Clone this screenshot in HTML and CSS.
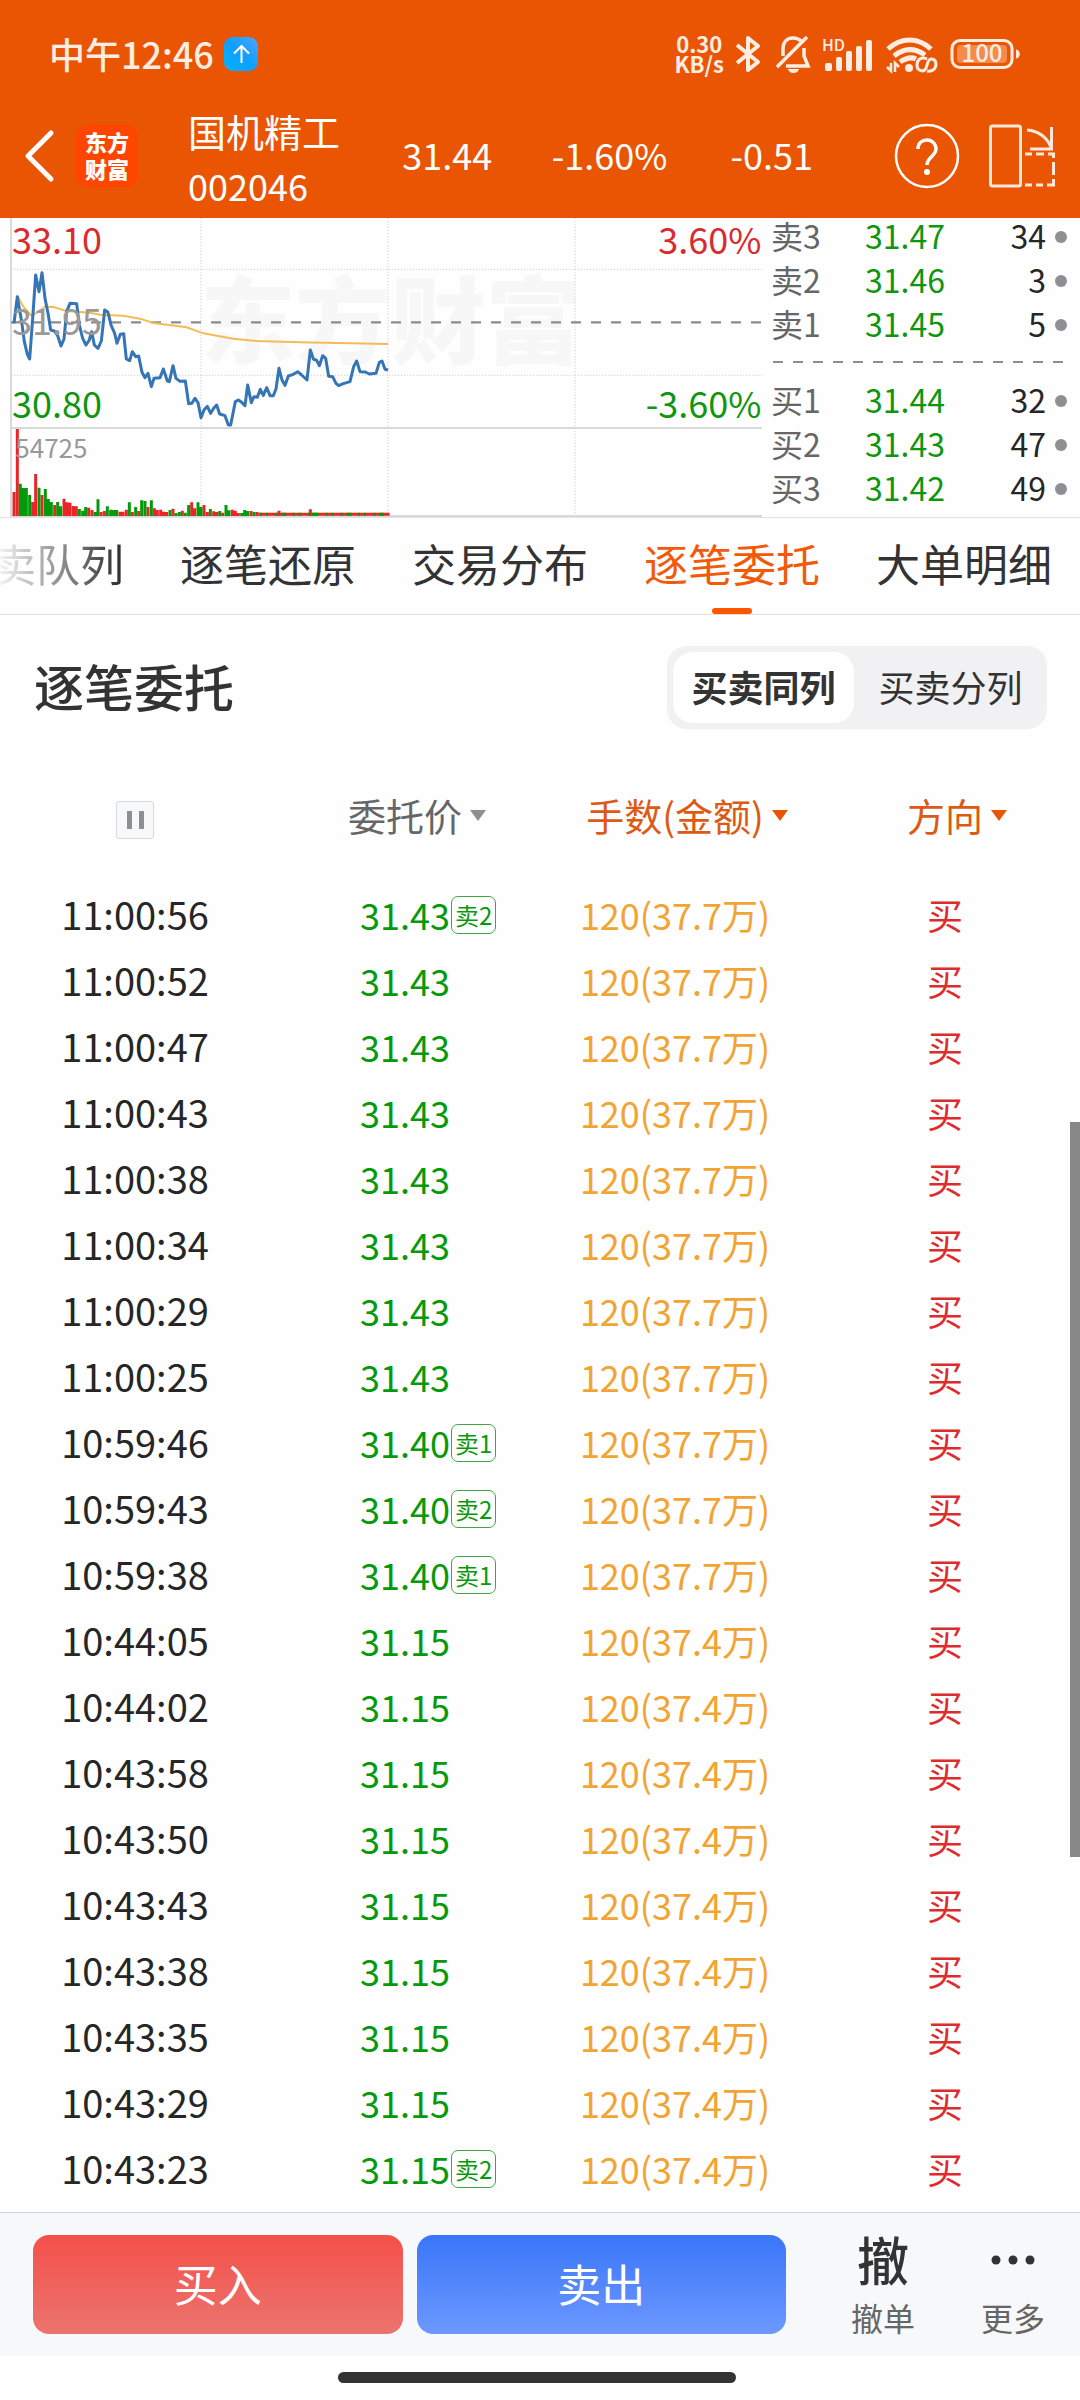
FILE: index.html
```html
<!DOCTYPE html>
<html lang="zh-CN">
<head>
<meta charset="utf-8">
<meta name="viewport" content="width=device-width, initial-scale=1">
<title>国机精工 002046</title>
<link rel="stylesheet" href="styles.css">
</head>
<body>
<header class="top">
  <div class="status">
    <span class="status-time">中午12:46</span>
    <svg class="status-app" width="34" height="34" viewBox="0 0 34 34" aria-hidden="true">
      <defs><linearGradient id="app" x1="0" y1="1" x2="1" y2="0"><stop offset="0" stop-color="#00b4ff"/><stop offset=".5" stop-color="#0f9fff"/><stop offset="1" stop-color="#4fa4ff"/></linearGradient></defs>
      <rect width="34" height="34" rx="9" fill="url(#app)"/>
      <path d="M17.500 26V9M10 16.500L17.500 9L25 16.500" fill="none" stroke="#fff" stroke-width="2"/>
    </svg>
    <div class="status-icons">
      <span class="net-speed"><span>0.30</span><span>KB/s</span></span>
      <svg width="28" height="40" viewBox="0 0 28 40" fill="none" stroke="#ffede2" stroke-width="4" stroke-linejoin="round" aria-hidden="true">
        <path d="M1 11L22 28L12 36V4L22 12L1 29"/>
      </svg>
      <svg width="34" height="40" viewBox="0 0 34 40" fill="none" stroke="#ffede2" stroke-width="3.500" aria-hidden="true">
        <path d="M7 22V15C7 8 11 4 17 4C20 4 23 5 25 7"/><path d="M28 14V22L32 32H10"/><path d="M1 33L31 3"/>
        <path d="M12 35H23C22 38 20 39 17.500 39C15 39 13 38 12 35Z" fill="#ffede2" stroke="none"/>
      </svg>
      <svg width="52" height="40" viewBox="0 0 52 40" aria-hidden="true">
        <g fill="#ffede2"><rect x="3" y="29" width="7" height="8" rx="2"/><rect x="14" y="23" width="6" height="14" rx="2"/><rect x="24" y="17" width="6" height="20" rx="2"/><rect x="34" y="12" width="6" height="25" rx="2"/><rect x="44" y="6" width="6" height="31" rx="2"/></g>
        <text class="hd" x="0" y="17">HD</text>
      </svg>
      <svg width="52" height="40" viewBox="0 0 52 40" fill="none" stroke="#ffede2" aria-hidden="true">
        <path d="M2 15C15 3 32 3 45 15" stroke-width="5"/><path d="M8 22C18 14 29 14 39 21" stroke-width="5"/><path d="M14 28C20 24 26 23 30 25" stroke-width="5"/>
        <circle cx="23" cy="34" r="4" fill="#ffede2" stroke="none"/>
        <path d="M5 29V37L1 33M9 38V29L13 33" stroke-width="2.500"/>
        <path d="M41 25C35 22 31 26 31 31C31 37 38 39 40 34L42 28C44 23 50 25 50 30C50 35 46 38 41 37" stroke-width="3"/>
      </svg>
      <svg width="70" height="40" viewBox="0 0 70 40" aria-hidden="true">
        <rect x="2" y="6.500" width="60" height="27" rx="8" fill="none" stroke="#ffede2" stroke-width="3"/>
        <rect x="7" y="11" width="50" height="18" rx="4" fill="#f48a4c"/>
        <path d="M66 15.500C71 16 71 24 66 24.500Z" fill="#ffede2"/>
        <text class="battery-level" x="32" y="28" text-anchor="middle">100</text>
      </svg>
    </div>
  </div>
  <div class="nav">
    <button class="icon-btn back" type="button" aria-label="返回">
      <svg width="32" height="54" viewBox="0 0 32 54" fill="none" stroke="#fff" stroke-width="5" stroke-linecap="round" stroke-linejoin="round"><path d="M27 4L4 27L27 50"/></svg>
    </button>
    <span class="brand"><span>东方</span><span>财富</span></span>
    <h1 class="stock"><span>国机精工</span><span class="code">002046</span></h1>
    <div class="quote"><span>31.44</span><span>-1.60%</span><span>-0.51</span></div>
    <button class="icon-btn" type="button" aria-label="帮助">
      <svg width="66" height="66" viewBox="0 0 66 66" fill="none" stroke="#fff"><circle cx="33" cy="33" r="31" stroke-width="2.500"/><path d="M24 26C24 20 28 17 33 17C38 17 42 21 42 26C42 33 33 34 33 42" stroke-width="3.500"/><circle cx="33" cy="49" r="3" fill="#fff" stroke="none"/></svg>
    </button>
    <button class="icon-btn rotate" type="button" aria-label="横屏">
      <svg width="66" height="64" viewBox="0 0 66 64" fill="none" stroke="#ffe9dc" stroke-width="3"><rect x="1.500" y="2" width="30" height="60" rx="2"/><path d="M38 6C50 7 58 14 62 23M62.500 3V25H41"/><path d="M36 30H43M47 30H55M59 30H64.500V34M64.500 38V51M64.500 55V61H58M54 61H47M43 61H36"/></svg>
    </button>
  </div>
</header>

<section class="market">
  <svg class="chart" viewBox="0 9 2286 897" role="img" aria-label="分时走势">
    <text class="watermark" x="600" y="427">东方财富</text>
    <g class="grid-dots"><path d="M33 163H2286M33 481H2286M603 9V900M1164 9V900M1725 9V900"/></g>
    <path class="frame" d="M33 9V906M33 639H2286M33 903H2286"/>
    <path d="M33 322H2286" stroke="#8c8c8c" stroke-width="7" stroke-dasharray="30 30"/>
    <path d="M52 242L70 275L95 303L115 290L135 275L160 276L200 288L270 293L300 299L370 302L420 311L460 324L560 337L610 355L700 371L770 378L900 382L1164 387" fill="none" stroke="#f2bd55" stroke-width="6"/>
    <path d="M42 325L52 245L65 320L73 380L82 418L89 432L98 310L107 180L117 230L126 173L135 250L145 300L152 345L163 348L173 362L183 393L192 372L200 290L210 265L230 266L238 330L248 370L258 390L268 375L275 350L283 390L294 400L304 378L314 285L324 292L333 330L344 355L351 385L361 358L371 356L379 432L389 437L397 410L407 425L416 423L426 472L435 488L444 475L454 515L462 490L480 488L490 462L502 498L508 500L519 452L528 490L540 499L556 498L566 566L575 565L585 550L594 563L603 608L612 585L622 574L632 595L641 580L650 570L659 597L675 602L685 630L692 630L697 605L706 560L715 555L725 562L735 572L743 510L754 563L762 545L772 547L781 523L790 541L800 518L810 542L820 542L828 522L837 460L846 495L855 511L865 483L880 478L893 470L905 480L921 495L931 405L940 432L950 436L958 452L968 422L977 430L986 484L998 485L1008 505L1016 512L1030 506L1050 500L1061 455L1070 438L1080 470L1096 471L1108 477L1128 475L1138 442L1146 438L1155 463L1164 465" fill="none" stroke="#3574b5" stroke-width="9" stroke-linejoin="round"/>
    <g fill="none" stroke-width="9">
      <path stroke="#e8262a" d="M42 903V831M52 903V642M98 903V861M107 903V777M126 903V840M164 903V870M192 903V851M201 903V862M210 903V863M220 903V873M229 903V874M266 903V878M276 903V885M303 903V891M313 903V888M360 903V890M369 903V890M379 903V884M397 903V891M416 903V888M444 903V876M463 903V880M472 903V885M482 903V884M491 903V890M500 903V891M519 903V881M547 903V887M575 903V862M584 903V880M612 903V870M622 903V891M641 903V889M650 903V891M668 903V893M697 903V884M706 903V887M715 903V894M753 903V888M771 903V891M837 903V887M931 903V883M776 898H1169"/>
      <path stroke="#069a0b" d="M61 903V806M70 903V819M79 903V819M89 903V840M117 903V818M136 903V822M145 903V852M154 903V861M173 903V861M182 903V874M238 903V882M248 903V887M257 903V876M285 903V891M294 903V853M322 903V874M332 903V884M341 903V885M350 903V885M388 903V862M407 903V876M425 903V856M435 903V858M454 903V856M510 903V885M528 903V894M538 903V891M556 903V893M566 903V870M594 903V862M603 903V876M631 903V882M659 903V888M678 903V870M687 903V886M725 903V894M734 903V885M743 903V888M762 903V891M940 903V893"/>
      <path stroke="#069a0b" stroke-dasharray="6 12 6 22 6 12 14 20" d="M780 898H1160"/>
    </g>
    <g class="chart-label">
      <text class="up" x="36" y="117">33.10</text><text class="flat" x="36" y="361">31.95</text><text class="down" x="36" y="608">30.80</text>
      <text class="up" x="2284" y="117" text-anchor="end">3.60%</text><text class="down" x="2284" y="608" text-anchor="end">-3.60%</text>
      <text class="volume" x="46" y="728">54725</text>
    </g>
  </svg>
  <div class="book">
    <table>
      <tr><th scope="row">卖3</th><td>31.47</td><td class="lots">34</td></tr>
      <tr><th scope="row">卖2</th><td>31.46</td><td class="lots">3</td></tr>
      <tr><th scope="row">卖1</th><td>31.45</td><td class="lots">5</td></tr>
    </table>
    <hr class="spread">
    <table>
      <tr><th scope="row">买1</th><td>31.44</td><td class="lots">32</td></tr>
      <tr><th scope="row">买2</th><td>31.43</td><td class="lots">47</td></tr>
      <tr><th scope="row">买3</th><td>31.42</td><td class="lots">49</td></tr>
    </table>
  </div>
</section>

<nav class="tabs">
  <button type="button" class="tab faded">卖队列</button>
  <button type="button" class="tab">逐笔还原</button>
  <button type="button" class="tab">交易分布</button>
  <button type="button" class="tab active" aria-current="page">逐笔委托</button>
  <button type="button" class="tab">大单明细</button>
</nav>

<main class="panel">
  <div class="panel-head">
    <h2>逐笔委托</h2>
    <div class="segment">
      <button type="button" class="on" aria-pressed="true">买卖同列</button>
      <button type="button" aria-pressed="false">买卖分列</button>
    </div>
  </div>
  <table class="orders">
    <thead>
      <tr>
        <th><button type="button" class="pause" aria-label="暂停"><i></i><i></i></button></th>
        <th><button type="button" class="sort">委托价</button></th>
        <th><button type="button" class="sort hot">手数(金额)</button></th>
        <th><button type="button" class="sort hot">方向</button></th>
      </tr>
    </thead>
    <tbody>
      <tr><td>11:00:56</td><td><span class="price">31.43<span class="badge">卖2</span></span></td><td>120(37.7万)</td><td>买</td></tr>
      <tr><td>11:00:52</td><td>31.43</td><td>120(37.7万)</td><td>买</td></tr>
      <tr><td>11:00:47</td><td>31.43</td><td>120(37.7万)</td><td>买</td></tr>
      <tr><td>11:00:43</td><td>31.43</td><td>120(37.7万)</td><td>买</td></tr>
      <tr><td>11:00:38</td><td>31.43</td><td>120(37.7万)</td><td>买</td></tr>
      <tr><td>11:00:34</td><td>31.43</td><td>120(37.7万)</td><td>买</td></tr>
      <tr><td>11:00:29</td><td>31.43</td><td>120(37.7万)</td><td>买</td></tr>
      <tr><td>11:00:25</td><td>31.43</td><td>120(37.7万)</td><td>买</td></tr>
      <tr><td>10:59:46</td><td><span class="price">31.40<span class="badge">卖1</span></span></td><td>120(37.7万)</td><td>买</td></tr>
      <tr><td>10:59:43</td><td><span class="price">31.40<span class="badge">卖2</span></span></td><td>120(37.7万)</td><td>买</td></tr>
      <tr><td>10:59:38</td><td><span class="price">31.40<span class="badge">卖1</span></span></td><td>120(37.7万)</td><td>买</td></tr>
      <tr><td>10:44:05</td><td>31.15</td><td>120(37.4万)</td><td>买</td></tr>
      <tr><td>10:44:02</td><td>31.15</td><td>120(37.4万)</td><td>买</td></tr>
      <tr><td>10:43:58</td><td>31.15</td><td>120(37.4万)</td><td>买</td></tr>
      <tr><td>10:43:50</td><td>31.15</td><td>120(37.4万)</td><td>买</td></tr>
      <tr><td>10:43:43</td><td>31.15</td><td>120(37.4万)</td><td>买</td></tr>
      <tr><td>10:43:38</td><td>31.15</td><td>120(37.4万)</td><td>买</td></tr>
      <tr><td>10:43:35</td><td>31.15</td><td>120(37.4万)</td><td>买</td></tr>
      <tr><td>10:43:29</td><td>31.15</td><td>120(37.4万)</td><td>买</td></tr>
      <tr><td>10:43:23</td><td><span class="price">31.15<span class="badge">卖2</span></span></td><td>120(37.4万)</td><td>买</td></tr>
    </tbody>
  </table>
  <div class="scroll-thumb"></div>
</main>

<footer class="actions">
  <button type="button" class="trade buy">买入</button>
  <button type="button" class="trade sell">卖出</button>
  <div class="extra">
    <button type="button" class="action"><span class="glyph">撤</span><span>撤单</span></button>
    <button type="button" class="action"><span class="glyph dots"><svg width="44" height="10" viewBox="0 0 44 10" fill="#333"><circle cx="5" cy="5" r="4.500"/><circle cx="22" cy="5" r="4.500"/><circle cx="39" cy="5" r="4.500"/></svg></span><span>更多</span></button>
  </div>
</footer>
<div class="home"><span></span></div>
</body>
</html>
```

FILE: styles.css
```css
* { box-sizing: border-box; }

body {
  margin: 0;
  min-height: 100vh;
  display: flex;
  flex-direction: column;
  background: #fefefe;
  color: #262626;
  font-family: "Noto Sans CJK SC", sans-serif;
  font-size: 36px;
  overflow-x: hidden;
}

button {
  margin: 0;
  padding: 0;
  border: 0;
  background: none;
  color: inherit;
  font: inherit;
  cursor: pointer;
}

svg { display: block; flex: none; overflow: visible; }
table { border-collapse: collapse; width: 100%; }
th, td { padding: 0; font-weight: 400; }

/* status bar and stock header */
.top { background: #ea5504; color: #fff; padding-bottom: 4px; }

.status {
  display: flex;
  align-items: center;
  height: 98px;
  padding: 10px 60px 0 49px;
  color: #ffede2;
}
.status-time { padding-bottom: 3px; font-weight: 500; line-height: 44px; }
.status-app { margin-left: 10px; }
.status-icons { display: flex; align-items: center; gap: 12px; margin-left: auto; }
.net-speed { display: flex; flex-direction: column; padding-bottom: 2px; font-size: 22px; font-weight: 700; line-height: 20px; text-align: center; }
.hd { font-size: 16px; font-weight: 500; fill: #ffede2; }
.battery-level { font-size: 24px; font-weight: 500; fill: #ffede2; }

.nav { display: flex; align-items: center; height: 116px; padding: 0 25px 0 24px; }
.icon-btn { flex: none; }
.back { width: 52px; }
.rotate { margin-left: 29px; }
.brand {
  display: flex;
  flex-direction: column;
  justify-content: center;
  width: 62px;
  height: 62px;
  padding-bottom: 2px;
  border-radius: 12px;
  background: #ff4500;
  font-size: 22px;
  font-weight: 900;
  line-height: 27px;
  text-align: center;
}
.stock {
  display: flex;
  flex-direction: column;
  margin: 0 0 0 50px;
  padding-top: 4px;
  font-size: 38px;
  font-weight: 400;
  line-height: 54px;
}
.code { font-size: 36px; }
.quote {
  flex: 1;
  display: grid;
  grid-template-columns: repeat(3, 1fr);
  margin: 0 41px 0 26px;
  padding-bottom: 4px;
  text-align: center;
}

/* intraday chart and order book */
.market {
  display: grid;
  grid-template-columns: 762fr 318fr;
  border-bottom: 1px solid #e2e2e2;
}
.chart { width: 100%; height: auto; }
.watermark { font-size: 286px; font-weight: 900; fill: #f7f7f7; }
.grid-dots { stroke: #dcdcdc; stroke-width: 4; stroke-dasharray: 4 5; }
.frame { fill: none; stroke: #d9d9d9; stroke-width: 6; }
.chart-label { font-size: 108px; }
.volume { font-size: 78px; fill: #999; }
.up { fill: #d92b2f; }
.down { fill: #0f960f; }
.flat { fill: #999; }

.book { padding: 0 13px 0 9px; font-size: 32px; line-height: 34px; }
.book table { table-layout: fixed; }
.book tr > * { padding-bottom: 10px; white-space: nowrap; }
.book th { width: 58px; color: #666; text-align: left; }
.book td { color: #0f960f; text-align: right; }
.book td:nth-child(2) { width: 116px; }
.book .lots { color: #262626; }
.lots::after {
  content: "";
  display: inline-block;
  width: 12px;
  height: 12px;
  margin-left: 9px;
  border-radius: 50%;
  background: #8e8e93;
  vertical-align: 6px;
}
.spread {
  height: 2px;
  margin: 11px -4px 19px 2px;
  border: 0;
  background: repeating-linear-gradient(90deg, #8c8c8c 0 10px, transparent 10px 20px);
}

/* section tabs */
.tabs {
  display: flex;
  justify-content: flex-end;
  gap: 56px;
  height: 97px;
  padding-right: 28px;
  border-bottom: 1px solid #e0e0e0;
  color: #333;
  font-size: 44px;
}
.tab { position: relative; flex: none; padding-bottom: 6px; white-space: nowrap; }
.faded {
  background: linear-gradient(90deg, #fff, #333 95%);
  background-clip: text;
  -webkit-background-clip: text;
  color: transparent;
}
.active { color: #f25a0a; }
.active::after {
  content: "";
  position: absolute;
  left: 50%;
  bottom: 0;
  width: 40px;
  height: 6px;
  margin-left: -20px;
  border-radius: 3px;
  background: #ff5500;
}

/* order list */
.panel { position: relative; padding-bottom: 9px; }
.panel-head {
  display: flex;
  justify-content: space-between;
  align-items: center;
  padding: 31px 33px 24px 34px;
}
.panel-head h2 { margin: 0; padding-bottom: 6px; color: #333; font-size: 50px; font-weight: 500; line-height: 60px; }
.segment { display: flex; gap: 6px; padding: 6px; border-radius: 20px; background: #f1f1f4; color: #333; }
.segment button { width: 181px; height: 71px; padding-bottom: 4px; border-radius: 20px; }
.segment .on { background: #fff; font-weight: 700; }

.orders { table-layout: fixed; text-align: center; }
.orders th { height: 130px; padding-bottom: 8px; font-size: 38px; vertical-align: middle; }
.orders td { height: 66px; padding-bottom: 4px; line-height: 50px; vertical-align: middle; }
.orders td:nth-child(1) { font-size: 38px; }
.orders td:nth-child(2) { color: #069a0b; }
.orders td:nth-child(3) { color: #f2a432; }
.orders td:nth-child(4) { color: #de2b2e; }
.price { position: relative; }
.badge {
  position: absolute;
  left: 100%;
  top: 50%;
  height: 38px;
  margin: -18px 0 0 1px;
  padding: 0 3px;
  border: 1px solid #3fa643;
  border-radius: 7px;
  font-size: 24px;
  line-height: 35px;
  white-space: nowrap;
}
.pause {
  display: inline-flex;
  justify-content: center;
  align-items: center;
  gap: 7px;
  width: 38px;
  height: 38px;
  border: 1px solid #d8dade;
  border-radius: 3px;
  background: #f7f8fa;
  vertical-align: middle;
}
.pause i { width: 5px; height: 18px; background: #8e8e93; }
.sort { position: relative; color: #666; line-height: 50px; white-space: nowrap; }
.sort::after {
  content: "";
  position: absolute;
  left: 100%;
  top: 50%;
  margin: -5px 0 0 8px;
  border: 8px solid transparent;
  border-top: 11px solid #8e8e93;
  border-bottom: 0;
}
.hot { color: #dd5a14; }
.hot::after { border-top-color: #ea5504; }
.scroll-thumb { position: absolute; right: 0; top: 507px; width: 10px; height: 46%; background: #888; }

/* trade bar */
.actions {
  display: flex;
  gap: 14px;
  margin-top: auto;
  padding: 22px 0 22px 33px;
  border-top: 1px solid #d0d2d6;
  background: #f7f8fa;
}
.trade { flex: 1; height: 99px; padding-bottom: 4px; border-radius: 16px; color: #fff; font-size: 44px; }
.buy { background: linear-gradient(#f4504a, #ec746e); }
.sell { background: linear-gradient(#3a76f8, #6c98ff); }
.extra { display: flex; padding: 0 2px 0 18px; }
.action {
  display: flex;
  flex-direction: column;
  align-items: center;
  width: 130px;
  color: #666;
  font-size: 32px;
  line-height: 32px;
}
.glyph {
  display: flex;
  align-items: center;
  height: 50px;
  margin-bottom: 16px;
  padding-bottom: 3px;
  color: #333;
  font-size: 52px;
  font-weight: 500;
}
.dots { padding: 0; }

.home { display: flex; justify-content: center; align-items: center; height: 44px; padding: 0 6px 2px 0; background: #fff; }
.home span { width: 37%; height: 11px; border-radius: 6px; background: #333; }
```
